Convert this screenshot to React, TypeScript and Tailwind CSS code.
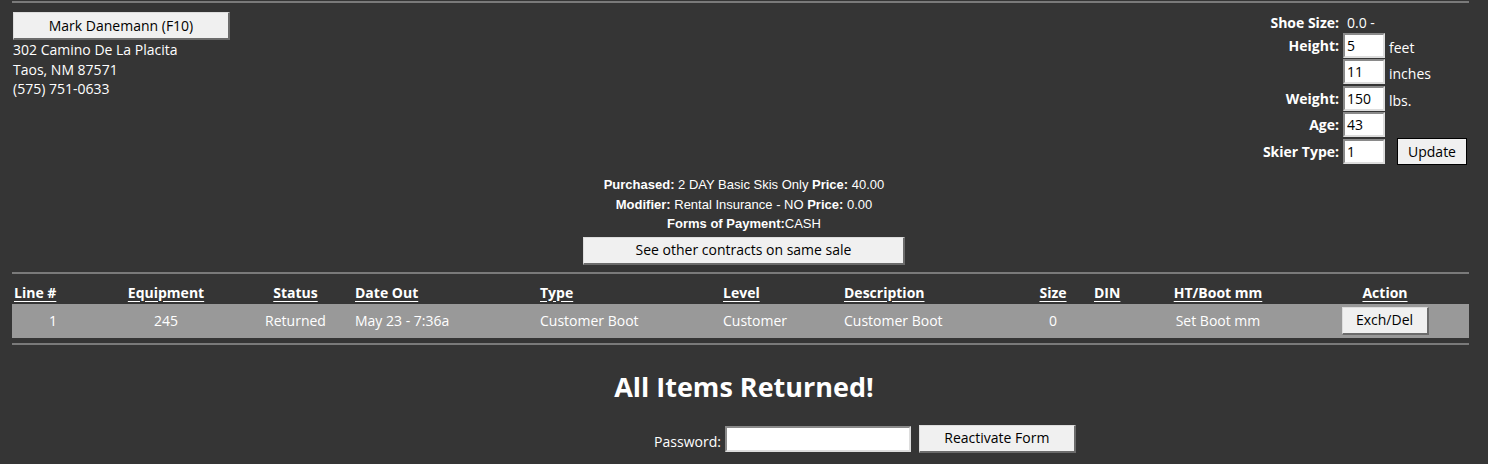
const cols = [
  { name: "Line #", w: "w-[82px]", h: "text-left pl-[2px]", c: "text-center" },
  { name: "Equipment", w: "w-[144px]", h: "text-center", c: "text-center" },
  { name: "Status", w: "w-[115px]", h: "text-center", c: "text-center" },
  { name: "Date Out", w: "w-[185px]", h: "text-left pl-[2px]", c: "text-left pl-[2px]" },
  { name: "Type", w: "w-[183px]", h: "text-left pl-[2px]", c: "text-left pl-[2px]" },
  { name: "Level", w: "w-[121px]", h: "text-left pl-[2px]", c: "text-left pl-[2px]" },
  { name: "Description", w: "w-[172px]", h: "text-left pl-[2px]", c: "text-left pl-[2px]" },
  { name: "Size", w: "w-[78px]", h: "text-center", c: "text-center" },
  { name: "DIN", w: "w-[43px]", h: "text-left pl-[2px]", c: "text-left pl-[2px]" },
  { name: "HT/Boot mm", w: "w-[166px]", h: "text-center", c: "text-center" },
  { name: "Action", w: "w-[168px]", h: "text-center", c: "text-center" },
];

const row = ["1", "245", "Returned", "May 23 - 7:36a", "Customer Boot", "Customer", "Customer Boot", "0", "", "Set Boot mm"];

const btn =
  "bg-[#f0f0f0] text-black border border-t-[#ddd] border-l-[#ddd] border-b-[#6b6b6b] border-r-[#6b6b6b] border-b-2 border-r-2";

const input = "bg-white text-black border-2 border-t-[#8a8a8a] border-l-[#8a8a8a] border-b-[#ddd] border-r-[#ddd] px-[2px] outline-none";

function Field({ label, value, unit }: { label?: string; value: string; unit?: string }) {
  return (
    <div className="flex items-center h-[26.5px]">
      <span className="w-[100px] text-right pr-[4px] font-bold">{label}</span>
      <input readOnly value={value} className={`${input} w-[42px] h-[25px] text-[14px]`} />
      <span className="pl-[4px] pt-[4px]">{unit}</span>
    </div>
  );
}

export default function App() {
  return (
    <div className="min-h-[464px] bg-[#353535] text-white text-[14px] leading-[19.5px]" style={{ fontFamily: "'Open Sans', Lato, sans-serif" }}>
      <div className="pl-[12px] pr-[19px] pt-[1px]">
        <div className="h-[2px] bg-[#7a7a7a]" />

        <div className="flex justify-between">
          {/* customer */}
          <div className="pt-[9px] pl-[1px]">
            <button className={`${btn} w-[217px] h-[28px] text-[14px]`}>Mark Danemann (F10)</button>
            <div>
              <div>302 Camino De La Placita</div>
              <div>Taos, NM 87571</div>
              <div>(575) 751-0633</div>
            </div>
          </div>

          {/* measurements */}
          <div className="pt-[10px] pr-[2px] w-[226px]">
            <div className="flex h-[19px] items-center">
              <span className="w-[100px] text-right pr-[4px] font-bold">Shoe Size:</span>
              <span className="pl-[4px]">0.0 -</span>
            </div>
            <Field label="Height:" value="5" unit="feet" />
            <Field value="11" unit="inches" />
            <Field label="Weight:" value="150" unit="lbs." />
            <Field label="Age:" value="43" />
            <div className="flex items-center h-[27px]">
              <span className="w-[100px] text-right pr-[4px] font-bold">Skier Type:</span>
              <input readOnly value="1" className={`${input} w-[42px] h-[25px] text-[14px]`} />
              <button className="ml-[12px] w-[70px] h-[27px] bg-[#f0f0f0] text-black border border-black text-[14px]">Update</button>
            </div>
          </div>
        </div>

        {/* purchase */}
        <div className="flex flex-col items-center text-[13px] leading-[19.5px] mt-[10px] pl-[7px]" style={{ fontFamily: "'Liberation Sans', Arial, sans-serif" }}>
          <div><b>Purchased:</b> 2 DAY Basic Skis Only <b>Price:</b> 40.00</div>
          <div><b>Modifier:</b> Rental Insurance - NO <b>Price:</b> 0.00</div>
          <div><b>Forms of Payment:</b>CASH</div>
          <button className={`${btn} w-[322px] h-[28px] mt-[3px] text-[14px]`} style={{ fontFamily: "'Open Sans', Lato, sans-serif" }}>
            See other contracts on same sale
          </button>
        </div>

        <div className="h-[2px] bg-[#7a7a7a] mt-[7px]" />

        {/* table */}
        <div className="mt-[9px]">
          <div className="flex font-bold h-[20px]">
            {cols.map((c) => (
              <div key={c.name} className={`${c.w} ${c.h}`}>
                <span className="underline underline-offset-[3px]">{c.name}</span>
              </div>
            ))}
          </div>
          <div className="flex items-center bg-[#999] h-[34px] mt-[1px]">
            {cols.map((c, i) => (
              <div key={c.name} className={`${c.w} ${c.c}`}>
                {i < row.length ? (
                  row[i]
                ) : (
                  <button className={`${btn} w-[87px] h-[28px] text-[14px]`}>Exch/Del</button>
                )}
              </div>
            ))}
          </div>
        </div>

        <div className="h-[2px] bg-[#7a7a7a] mt-[5px]" />

        <div className="flex flex-col items-center pl-[7px]">
          <h1 className="text-[27px] font-bold leading-[34px] mt-[25px]">All Items Returned!</h1>
          <div className="flex items-center mt-[21px] gap-[4px] ml-[242px]">
            <span className="pt-[6px]">Password:</span>
            <input readOnly className={`${input} w-[186px] h-[26px]`} />
            <button className={`${btn} ml-[4px] w-[157px] h-[28px] text-[14px]`}>Reactivate Form</button>
          </div>
        </div>
      </div>
    </div>
  );
}
